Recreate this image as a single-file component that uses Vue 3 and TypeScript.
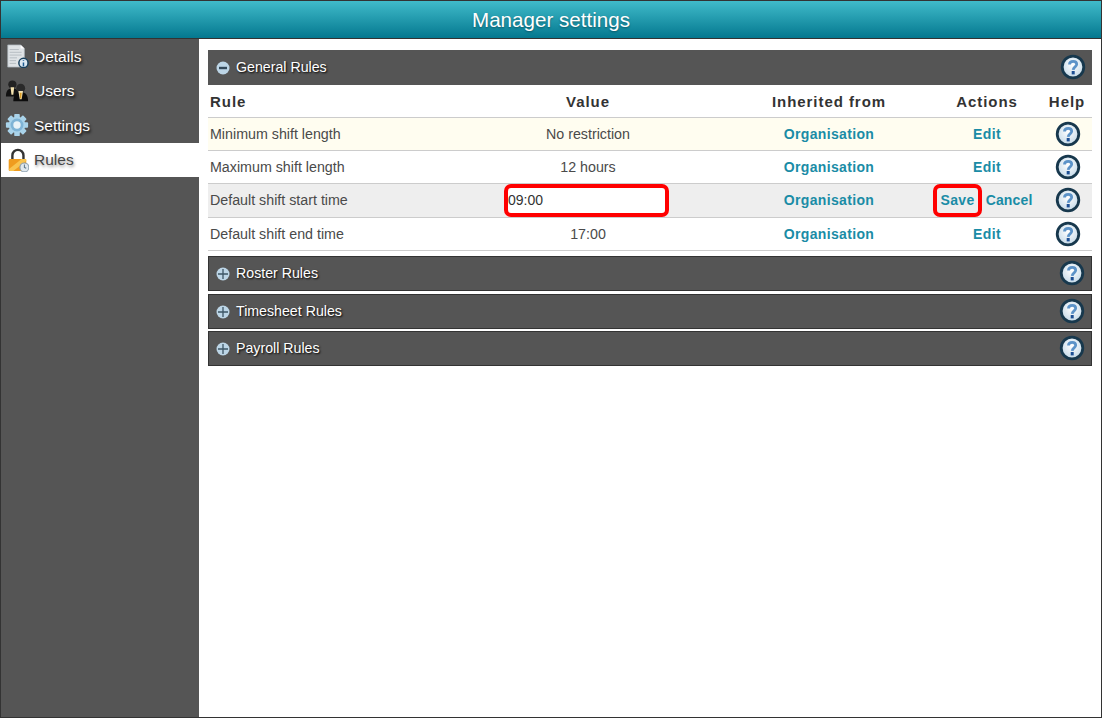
<script setup lang="ts">
interface NavItem { label: string; icon: string; active?: boolean }
interface Row { rule: string; value: string; editing?: boolean; tint?: boolean }

const nav: NavItem[] = [
  { label: 'Details', icon: 'doc' },
  { label: 'Users', icon: 'users' },
  { label: 'Settings', icon: 'gear' },
  { label: 'Rules', icon: 'lock', active: true },
]
const rows: Row[] = [
  { rule: 'Minimum shift length', value: 'No restriction', tint: true },
  { rule: 'Maximum shift length', value: '12 hours' },
  { rule: 'Default shift start time', value: '09:00', editing: true },
  { rule: 'Default shift end time', value: '17:00' },
]
const collapsed: string[] = ['Roster Rules', 'Timesheet Rules', 'Payroll Rules']
const gearTeeth: number[] = [0, 45, 90, 135, 180, 225, 270, 315]
</script>

<template>
  <div class="app">
    <header class="title">Manager settings</header>
    <div class="body">
      <nav class="side">
        <a v-for="item in nav" :key="item.label" class="nav-item" :class="{ active: item.active }">
          <svg class="nav-icon" viewBox="0 0 26 26" aria-hidden="true">
            <template v-if="item.icon === 'doc'">
              <path d="M3 1h14l4 4v20H3z" fill="#dfe3e6" stroke="#aab2b8" stroke-width=".8" />
              <path d="M17 1v4h4z" fill="#fff" />
              <path d="M5 6h10M5 9h13M5 12h13M5 15h8M5 18h7M5 21h7" stroke="#b4bbc0" stroke-width="1" />
              <circle cx="20" cy="20.500" r="5" fill="#dbe8f2" stroke="#173f5c" stroke-width="1.600" />
              <path d="M20 20v4M20 17.500v1" stroke="#1d5c92" stroke-width="1.600" />
            </template>
            <template v-else-if="item.icon === 'users'">
              <circle cx="8" cy="6" r="4.500" fill="#222" />
              <path d="M1 19c0-7 3-9 7-9s7 2 7 9z" fill="#111" />
              <path d="M6 9h4l-1 8H7z" fill="#f4e2ae" />
              <circle cx="17" cy="10" r="4.800" fill="#2a2a2a" />
              <path d="M9 24c0-8 4-10 8-10s8 2 8 10z" fill="#0c0c0c" />
              <path d="M14.500 13h5l-1.500 9h-2z" fill="#f6e6b8" />
              <path d="M16 15h2l-.4 6h-1.200z" fill="#d99a22" />
            </template>
            <template v-else-if="item.icon === 'gear'">
              <rect
                v-for="a in gearTeeth"
                :key="a"
                x="10"
                y="1"
                width="6"
                height="6"
                rx="1"
                fill="#a9d3ea"
                :transform="`rotate(${a} 13 13)`"
              />
              <circle cx="13" cy="13" r="9" fill="#a9d3ea" />
              <circle cx="13" cy="13" r="7" fill="#7fb4d6" />
              <circle cx="13" cy="13" r="4" fill="#e9f3f8" />
            </template>
            <template v-else>
              <path d="M8 13V8a6 6 0 0 1 12 0v5" fill="none" stroke="#333" stroke-width="2.600" />
              <rect x="4" y="12" width="19" height="13" rx="1.500" fill="#ef9c1f" />
              <path d="M4 23l14-11h5v2L9 25H5.500z" fill="#f9c44f" />
              <circle cx="21" cy="21" r="4.800" fill="#dfe8ee" stroke="#8fa3b2" stroke-width="1.200" />
              <path d="M21 18v3l2 1" fill="none" stroke="#5b7488" stroke-width="1.100" />
            </template>
          </svg>
          <span class="nav-label">{{ item.label }}</span>
        </a>
      </nav>

      <main class="main">
        <section>
          <div class="bar first">
            <svg class="toggle" viewBox="0 0 14 14" aria-hidden="true">
              <circle cx="7" cy="7" r="6.500" fill="#bcd5e6" />
              <rect x="3" y="5.800" width="8" height="2.400" fill="#33495a" />
            </svg>
            <span class="bar-label">General Rules</span>
            <svg class="help bar-help" viewBox="0 0 26 26" aria-hidden="true">
              <use href="#help-mark" />
            </svg>
          </div>
          <table class="rules">
            <colgroup>
              <col class="c-rule" /><col class="c-value" /><col class="c-inh" /><col class="c-act" /><col class="c-help" />
            </colgroup>
            <thead>
              <tr>
                <th class="left">Rule</th>
                <th>Value</th>
                <th>Inherited from</th>
                <th>Actions</th>
                <th class="help-head">Help</th>
              </tr>
            </thead>
            <tbody>
              <tr v-for="row in rows" :key="row.rule" :class="{ tint: row.tint, editing: row.editing }">
                <td class="left">{{ row.rule }}</td>
                <td>
                  <input v-if="row.editing" class="time" :value="row.value" />
                  <template v-else>{{ row.value }}</template>
                </td>
                <td><a class="link">Organisation</a></td>
                <td>
                  <template v-if="row.editing">
                    <a class="link save">Save</a>
                    <a class="link cancel">Cancel</a>
                  </template>
                  <a v-else class="link">Edit</a>
                </td>
                <td>
                  <svg class="help" viewBox="0 0 26 26" aria-hidden="true">
                    <use href="#help-mark" />
                  </svg>
                </td>
              </tr>
            </tbody>
          </table>
        </section>

        <div class="stack">
          <div v-for="name in collapsed" :key="name" class="bar closed">
            <svg class="toggle" viewBox="0 0 14 14" aria-hidden="true">
              <circle cx="7" cy="7" r="6.500" fill="#bcd5e6" />
              <path d="M7 2v10M2 7h10" stroke="#3d5566" stroke-width="1.300" />
            </svg>
            <span class="bar-label">{{ name }}</span>
            <svg class="help bar-help" viewBox="0 0 26 26" aria-hidden="true">
              <use href="#help-mark" />
            </svg>
          </div>
        </div>
      </main>
    </div>

    <svg class="defs" width="0" height="0" aria-hidden="true">
      <defs>
        <radialGradient id="help-fill" cx="50%" cy="40%" r="60%">
          <stop offset="0" stop-color="#ffffff" />
          <stop offset="1" stop-color="#c4d9e8" />
        </radialGradient>
        <g id="help-mark">
          <circle cx="13" cy="13" r="10.800" fill="url(#help-fill)" stroke="#17384d" stroke-width="2.800" />
          <path
            d="M9.500 10.500C9.500 8.300 11.200 7.300 13.200 7.300 15.300 7.300 16.700 8.500 16.700 10.300 16.700 12.800 13.400 13 13.200 15.800"
            fill="none"
            stroke="#5c93c8"
            stroke-width="2.800"
          />
          <rect x="11.700" y="17" width="3" height="3.400" fill="#1c4f94" />
        </g>
      </defs>
    </svg>
  </div>
</template>

<style>
html, body { margin: 0; background: #fff; }
</style>

<style scoped>
.app {
  box-sizing: border-box;
  width: 1102px;
  height: 718px;
  border: 1px solid #333;
  display: flex;
  flex-direction: column;
  font-family: "Liberation Sans", Arial, sans-serif;
  font-size: 14px;
  color: #4a4a4a;
  background: #fff;
  overflow: hidden;
}
.title {
  height: 37px;
  flex: none;
  border-bottom: 1px solid #333;
  background: linear-gradient(#40bbca, #04788f);
  color: #fff;
  font-size: 20.600px;
  line-height: 37px;
  padding-bottom: 0;
  text-align: center;
  text-shadow: 0 1px 2px rgba(0, 0, 0, .35);
}
.body { flex: 1; display: flex; min-height: 0; }
.side { width: 198px; flex: none; background: #555; }
.nav-item {
  height: 34.500px;
  display: flex;
  align-items: center;
  gap: 5px;
  padding-left: 4px;
  color: #fff;
  font-size: 15.500px;
  text-shadow: 1px 2px 3px #000;
}
.nav-item.active { background: #fff; color: #444; text-shadow: 1px 2px 3px #999; }
.nav-icon { width: 24px; height: 24px; flex: none; }
.nav-label { margin-top: 1px; }
.main { flex: 1; padding: 11px 9px 0; min-width: 0; }
.bar {
  box-sizing: border-box;
  height: 35px;
  display: flex;
  align-items: center;
  gap: 6px;
  padding: 0 6px 0 8px;
  background: #555;
  color: #fff;
  font-size: 14.200px;
  text-shadow: 1px 1px 2px #000;
}
.bar.closed { border: 1px solid #333; padding-left: 7px; }
.bar-label { margin-top: -2px; }
.toggle { width: 14px; height: 14px; flex: none; }
.bar-help { margin-left: auto; margin-top: -1px; }
.help { display: block; width: 26px; height: 26px; }
td .help { margin: 0 auto; }
.rules {
  width: 884px;
  table-layout: fixed;
  border-collapse: collapse;
}
.c-rule { width: 241px; }
.c-value { width: 278px; }
.c-inh { width: 204px; }
.c-act { width: 112px; }
.c-help { width: 49px; }
th {
  height: 31px;
  padding: 1px 0 0;
  color: #333;
  font-size: 15px;
  font-weight: bold;
  letter-spacing: .95px;
  text-align: center;
  border-bottom: 1px solid #ccc;
}
td {
  height: 32px;
  padding: 0;
  font-size: 14.250px;
  text-align: center;
  border-bottom: 1px solid #ccc;
}
.left { padding-left: 2px; text-align: left; }
.help-head { padding-right: 1px; }
tr.tint td { background: #fffdf0; }
tr.editing td { height: 31px; padding-bottom: 2px; background: #eee; }
tr.editing td:nth-child(2) { height: 33px; padding-bottom: 0; }
.link {
  color: #1a8ca6;
  font-size: 14px;
  font-weight: bold;
  letter-spacing: .35px;
}
.time {
  box-sizing: border-box;
  display: block;
  width: 165px;
  height: 33px;
  margin: 0 auto 0 55px;
  padding: 0 0 2px 0;
  border: 4px solid #f00;
  border-radius: 7px;
  background: #fff;
  font: 14px "Liberation Sans", Arial, sans-serif;
  color: #333;
  outline: none;
}
.save {
  position: relative;
  margin-left: -1px;
  margin-right: 11px;
}
.save::after {
  content: "";
  position: absolute;
  left: -8px;
  right: -7px;
  top: -8px;
  bottom: -9px;
  border: 4px solid #f00;
  border-radius: 7px;
}
.cancel { letter-spacing: .15px; }
.stack { margin-top: 5px; display: flex; flex-direction: column; gap: 3px; }
.stack .bar:nth-child(3) { margin-top: -1px; }
.defs { position: absolute; }
</style>
